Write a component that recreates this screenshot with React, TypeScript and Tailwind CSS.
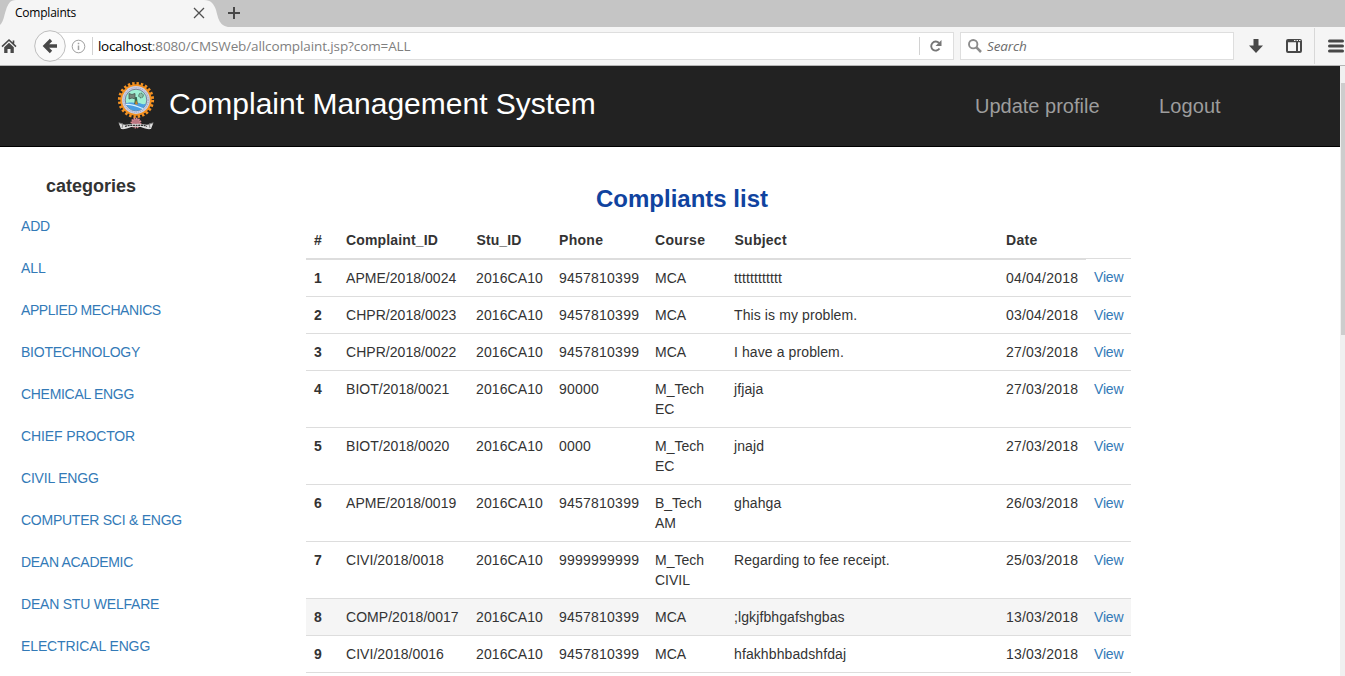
import React from 'react';

const categories = [
  { name: 'ADD', tracking: 'tracking-[-0.2px]' },
  { name: 'ALL', tracking: 'tracking-[0px]' },
  { name: 'APPLIED MECHANICS', tracking: 'tracking-[-0.43px]' },
  { name: 'BIOTECHNOLOGY', tracking: 'tracking-[-0.23px]' },
  { name: 'CHEMICAL ENGG', tracking: 'tracking-[-0.3px]' },
  { name: 'CHIEF PROCTOR', tracking: 'tracking-[-0.12px]' },
  { name: 'CIVIL ENGG', tracking: 'tracking-[-0.2px]' },
  { name: 'COMPUTER SCI & ENGG', tracking: 'tracking-[-0.25px]' },
  { name: 'DEAN ACADEMIC', tracking: 'tracking-[-0.3px]' },
  { name: 'DEAN STU WELFARE', tracking: 'tracking-[-0.21px]' },
  { name: 'ELECTRICAL ENGG', tracking: 'tracking-[-0.12px]' },
];

const headings = ['#', 'Complaint_ID', 'Stu_ID', 'Phone', 'Course', 'Subject', 'Date'];
const headingStyles = ['', 'tracking-[0.15px]', 'pl-[8.5px] tracking-[0.1px]', 'tracking-[0.3px]', 'tracking-[0.35px]', 'pl-[8.5px] tracking-[0.25px]', 'tracking-[0.3px]'];
const cellStyles = ['font-bold', 'tracking-[0.04px]', 'tracking-[0.1px]', 'tracking-[0.23px]', '', 'tracking-[0.1px]', 'tracking-[0.21px]'];

const complaints = [
  ['1', 'APME/2018/0024', '2016CA10', '9457810399', 'MCA', 'tttttttttttt', '04/04/2018'],
  ['2', 'CHPR/2018/0023', '2016CA10', '9457810399', 'MCA', 'This is my problem.', '03/04/2018'],
  ['3', 'CHPR/2018/0022', '2016CA10', '9457810399', 'MCA', 'I have a problem.', '27/03/2018'],
  ['4', 'BIOT/2018/0021', '2016CA10', '90000', 'M_Tech EC', 'jfjaja', '27/03/2018'],
  ['5', 'BIOT/2018/0020', '2016CA10', '0000', 'M_Tech EC', 'jnajd', '27/03/2018'],
  ['6', 'APME/2018/0019', '2016CA10', '9457810399', 'B_Tech AM', 'ghahga', '26/03/2018'],
  ['7', 'CIVI/2018/0018', '2016CA10', '9999999999', 'M_Tech CIVIL', 'Regarding to fee receipt.', '25/03/2018'],
  ['8', 'COMP/2018/0017', '2016CA10', '9457810399', 'MCA', ';lgkjfbhgafshgbas', '13/03/2018'],
  ['9', 'CIVI/2018/0016', '2016CA10', '9457810399', 'MCA', 'hfakhbhbadshfdaj', '13/03/2018'],
];

function BrowserChrome() {
  return (
    <div className="shrink-0 font-['Open_Sans',sans-serif]">
      <div className="relative flex h-[27px] bg-[#c5c5c5]">
        <svg className="absolute left-0 top-0" width="240" height="27" viewBox="0 0 240 27">
          <path d="M0 27V25C4 21 4 15 6 10C8 4 10 0 16 0H204C211 0 214 4 216 10C218 17 219 27 230 27Z" fill="#f5f5f5" />
          <path d="M194 8L204 18M204 8L194 18" stroke="#505050" strokeWidth="1.300" />
          <path d="M228 13H240M234 7V19" stroke="#484848" strokeWidth="2" />
        </svg>
        <span className="relative ml-[15px] text-[12px] leading-[26px] tracking-[-0.22px] text-black">Complaints</span>
      </div>
      <div className="flex h-[39px] items-center border-b border-[#b5b5b5] bg-[#f5f5f5]">
        <svg className="ml-px shrink-0" width="17" height="16" viewBox="0 0 17 16">
          <path d="M1 8.700L8 2L15 8.700M12.500 2.500V5.500" fill="none" stroke="#484848" strokeWidth="1.600" />
          <path d="M3.200 9.200L8 4.700L12.800 9.200V15H9.500V11H6.500V15H3.200Z" fill="#484848" />
        </svg>
        <svg className="relative z-10 ml-4 shrink-0" width="32" height="32" viewBox="0 0 32 32">
          <circle cx="16" cy="16" r="15.300" fill="#fafafa" stroke="#bdbdbd" />
          <path d="M23 16H11.500M17 10L11 16L17 22" fill="none" stroke="#484848" strokeWidth="3.300" />
        </svg>
        <div className="-ml-4 flex h-[28px] w-[904px] shrink-0 items-center border border-[#dedede] bg-white">
          <svg className="ml-5 shrink-0" width="15" height="15" viewBox="0 0 15 15">
            <circle cx="7.500" cy="7.500" r="6.300" fill="none" stroke="#a0a0a0" />
            <path d="M7.500 6.500V11M7.500 3.700V5.200" stroke="#a0a0a0" strokeWidth="1.500" />
          </svg>
          <div className="ml-[6px] h-[18px] w-px bg-[#d2d2d2]" />
          <div className="ml-[5px] w-[821px] whitespace-nowrap text-[13.5px] leading-[27px] tracking-[-0.11px] text-[#7f7f7f]">
            <span className="tracking-[-0.3px] text-black">localhost</span>:8080/CMSWeb/allcomplaint.jsp?com=ALL
          </div>
          <div className="h-[18px] w-px bg-[#d2d2d2]" />
          <svg className="ml-[9px] shrink-0" width="14" height="14" viewBox="0 0 14 14">
            <path d="M10.500 9.500A4.500 4.500 0 1 1 10 4" fill="none" stroke="#777" strokeWidth="1.900" />
            <path d="M12.500 1V7H6.500Z" fill="#777" />
          </svg>
        </div>
        <div className="ml-[6px] flex h-[28px] w-[274px] shrink-0 items-center border border-[#dedede] bg-white">
          <svg className="ml-[7px] shrink-0" width="14" height="14" viewBox="0 0 14 14">
            <circle cx="5.200" cy="5.200" r="4.200" fill="none" stroke="#8c8c8c" strokeWidth="1.900" />
            <path d="M8.200 8.200L13 13" stroke="#8c8c8c" strokeWidth="2.500" />
          </svg>
          <span className="ml-[5px] text-[13.5px] italic leading-[27px] tracking-[-0.1px] text-[#6c6c6c]">Search</span>
        </div>
        <svg className="ml-[15px] shrink-0" width="14" height="14" viewBox="0 0 14 14">
          <path d="M4.500 0H9.500V6.500H14L7 14L0 6.500H4.500Z" fill="#484848" />
        </svg>
        <svg className="ml-[23px] shrink-0" width="16" height="14" viewBox="0 0 16 14">
          <rect x="1" y="1" width="14" height="12" rx="1" fill="none" stroke="#484848" strokeWidth="2" />
          <path d="M1 2.300H15M11 2V13" stroke="#484848" strokeWidth="2" />
          <path d="M8 1.500H9.500M10.500 1.500H12M13 1.500H14.500" stroke="#f5f5f5" />
        </svg>
        <div className="ml-3 h-[36px] w-px shrink-0 bg-[#d8d8d8]" />
        <svg className="ml-[13px] shrink-0" width="17" height="14" viewBox="0 0 17 14">
          <path d="M1.500 2H14.500M1.500 7H14.500M1.500 12H14.500" stroke="#484848" strokeWidth="3" strokeLinecap="round" />
        </svg>
      </div>
    </div>
  );
}

function Crest() {
  return (
    <svg className="ml-[117px] mt-[15px] shrink-0" width="38" height="50" viewBox="0 0 38 50">
      <circle cx="19" cy="19" r="16.600" fill="none" stroke="#f49121" strokeWidth="3" strokeDasharray="2.400 1.946" />
      <circle cx="19" cy="19" r="15.700" fill="#f49121" />
      <circle cx="19" cy="19" r="13.900" fill="#c9cfe4" />
      <circle cx="19" cy="19" r="12.300" fill="none" stroke="#9292b2" strokeWidth=".8" strokeDasharray="1 1" />
      <circle cx="19" cy="19" r="10.800" fill="#9ff0d4" stroke="#656583" strokeWidth=".8" />
      <path d="M8.700 22.500C13 20.500 16 22.500 19 21.500C23 21.500 26 24.500 29 22.500C25 32.500 12 31.500 8.700 22.500Z" fill="#4b9ee3" />
      <path d="M9 23.500C15 22.500 20 25.500 26 27.500" fill="none" stroke="#d8f2ff" strokeWidth="1.200" />
      <path d="M12 12.500L15 13.500L18 12.500V18L15 17L12 18Z" fill="#75887d" stroke="#465b50" strokeWidth=".8" />
      <circle cx="24" cy="14.500" r="2.300" fill="#8bbfa7" stroke="#37564b" strokeDasharray="1 .6" />
      <path d="M18.200 16H19.800L20.800 23H17.200Z" fill="#35654e" />
      <path d="M19 19L21 23.500H18Z" fill="#d38627" />
      <circle cx="19" cy="42" r="4.500" fill="#b97580" stroke="#d98b91" strokeWidth="2" strokeDasharray="1.300 1" />
      <path d="M1.500 41.500C8 46 12 42 19 43C26 42 30 46 36.500 41.500L34 48C28 49 25 45 19 46C13 45 10 49 4 48Z" fill="#dedede" />
      <path d="M2 42L6 43L5 47M36 42L32 43L33 47" fill="none" stroke="#888" />
      <path d="M8 45.500C13 43.500 16 44.500 19 44.500S26 43.500 30 45.500" fill="none" stroke="#333" strokeWidth="1.300" strokeDasharray="2 .7" />
    </svg>
  );
}

function ComplaintTable() {
  return (
    <table className="w-[825px] table-fixed border-separate border-spacing-0 text-left text-[14px] leading-5 text-[#333]">
      <colgroup>
        <col className="w-[32px]" /><col className="w-[130px]" /><col className="w-[83px]" /><col className="w-[96px]" />
        <col className="w-[79px]" /><col className="w-[272px]" /><col className="w-[88px]" /><col className="w-[45px]" />
      </colgroup>
      <thead>
        <tr>
          {headings.map((h, i) => (
            <th key={h} className={`border-b-2 border-[#ddd] p-2 font-bold ${headingStyles[i]}`}>{h}</th>
          ))}
        </tr>
      </thead>
      <tbody className="align-top">
        {complaints.map((row, r) => (
          <tr key={row[0]} className={r === 7 ? 'bg-[#f5f5f5]' : ''}>
            {row.map((value, c) => (
              <td key={c} className={`${r === 0 ? '' : 'border-t border-[#ddd]'} p-2 ${cellStyles[c]}`}>
                {value}
              </td>
            ))}
            <td className={`tracking-[-0.2px] text-[#337ab7] ${r === 0 ? 'p-0' : 'border-t border-[#ddd] p-2'}`}>
              {r === 0 ? (
                <div className="-mt-[2px] border-t border-[#ddd] p-2"><a>View</a></div>
              ) : (
                <a>View</a>
              )}
            </td>
          </tr>
        ))}
        <tr><td colSpan={8} className="border-t border-[#ddd]" /></tr>
      </tbody>
    </table>
  );
}

export default function App() {
  return (
    <div className="flex h-[676px] w-[1345px] flex-col overflow-hidden bg-white font-['Liberation_Sans',Arial,sans-serif]">
      <BrowserChrome />
      <div className="flex min-h-0 flex-1">
        <div className="flex w-[1340px] shrink-0 flex-col">
          <header className="flex h-[81px] shrink-0 border-b border-black bg-[#222]">
            <Crest />
            <h1 className="ml-[14px] w-[806px] text-[30px] leading-[76px] text-white">Complaint Management System</h1>
            <a className="w-[184px] text-[20px] leading-[80px] text-[#9d9d9d]">Update profile</a>
            <a className="text-[20px] leading-[80px] tracking-[0.1px] text-[#9d9d9d]">Logout</a>
          </header>
          <div className="flex min-h-0 flex-1 overflow-hidden">
            <aside className="w-[306px] shrink-0 pl-[21px] pt-[29px]">
              <h2 className="ml-[25px] text-[18px] font-bold leading-5 text-[#333]">categories</h2>
              <nav className="mt-[9px] flex flex-col">
                {categories.map((c) => (
                  <a key={c.name} className={`h-[42px] text-[14px] leading-[42px] text-[#337ab7] ${c.tracking}`}>{c.name}</a>
                ))}
              </nav>
            </aside>
            <main className="w-[825px] shrink-0 pt-[37px]">
              <h2 className="mb-[8px] pl-[290px] text-[24px] font-bold leading-[30px] text-[#10439f]">Compliants list</h2>
              <ComplaintTable />
            </main>
          </div>
        </div>
        <div className="flex flex-1 flex-col bg-[#f0f0f0] pl-px pt-[17px]">
          <div className="h-[252px] bg-[#cdcdcd]" />
        </div>
      </div>
    </div>
  );
}
